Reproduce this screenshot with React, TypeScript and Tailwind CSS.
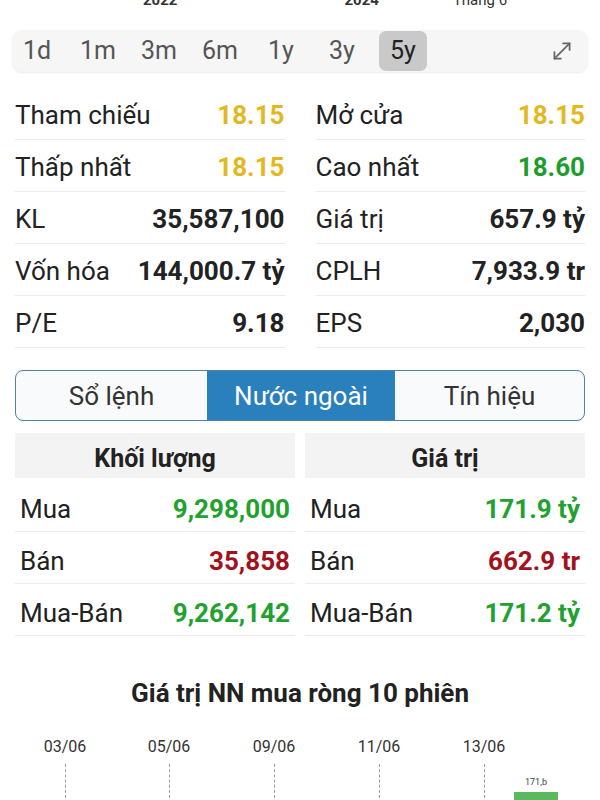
import React from "react";

const font = { fontFamily: "Roboto, 'Noto Sans', 'Liberation Sans', sans-serif" };

type Cell = { label: string; value: string; color: string };

const left: Cell[] = [
  { label: "Tham chiếu", value: "18.15", color: "text-[#e3b81f]" },
  { label: "Thấp nhất", value: "18.15", color: "text-[#e3b81f]" },
  { label: "KL", value: "35,587,100", color: "text-[#222]" },
  { label: "Vốn hóa", value: "144,000.7 tỷ", color: "text-[#222]" },
  { label: "P/E", value: "9.18", color: "text-[#222]" },
];
const right: Cell[] = [
  { label: "Mở cửa", value: "18.15", color: "text-[#e3b81f]" },
  { label: "Cao nhất", value: "18.60", color: "text-[#1c9e2c]" },
  { label: "Giá trị", value: "657.9 tỷ", color: "text-[#222]" },
  { label: "CPLH", value: "7,933.9 tr", color: "text-[#222]" },
  { label: "EPS", value: "2,030", color: "text-[#222]" },
];

const vol: Cell[] = [
  { label: "Mua", value: "9,298,000", color: "text-[#21a12e]" },
  { label: "Bán", value: "35,858", color: "text-[#a3121c]" },
  { label: "Mua-Bán", value: "9,262,142", color: "text-[#21a12e]" },
];
const val: Cell[] = [
  { label: "Mua", value: "171.9 tỷ", color: "text-[#21a12e]" },
  { label: "Bán", value: "662.9 tr", color: "text-[#a3121c]" },
  { label: "Mua-Bán", value: "171.2 tỷ", color: "text-[#21a12e]" },
];

function StatCol({ items }: { items: Cell[] }) {
  return (
    <div className="flex flex-col">
      {items.map((c) => (
        <div
          key={c.label}
          className="flex h-[52px] items-center justify-between border-b border-[#ebebeb] pt-[2px] text-[26px] leading-none"
        >
          <span className="text-[#222]">{c.label}</span>
          <span className={`font-bold ${c.color}`}>{c.value}</span>
        </div>
      ))}
    </div>
  );
}

function Table({ title, items }: { title: string; items: Cell[] }) {
  return (
    <div className="flex flex-col">
      <div className="flex h-[45px] items-center justify-center bg-[#f3f3f3] pt-[5px] text-[25px] font-bold leading-none text-[#222]">
        {title}
      </div>
      <div className="mt-[2px] flex flex-col">
        {items.map((c) => (
          <div
            key={c.label}
            className="flex h-[52px] items-center justify-between border-b border-[#ebebeb] px-[5px] pt-[6px] text-[26px] leading-none"
          >
            <span className="text-[#222]">{c.label}</span>
            <span className={`font-bold ${c.color}`}>{c.value}</span>
          </div>
        ))}
      </div>
    </div>
  );
}

export default function App() {
  const ranges = ["1d", "1m", "3m", "6m", "1y", "3y", "5y"];
  const dates = [
    { d: "03/06", x: 65 },
    { d: "05/06", x: 169 },
    { d: "09/06", x: 274 },
    { d: "11/06", x: 379 },
    { d: "13/06", x: 484 },
  ];
  return (
    <div className="h-[800px] w-[600px] overflow-hidden bg-white" style={font}>
      {/* top axis labels (cut) */}
      <div className="relative h-[30px] overflow-hidden">
        <div className="-mt-[11px] flex text-[15px] text-[#333]">
          <span className="ml-[143px] font-bold">2022</span>
          <span className="ml-[167px] font-bold">2024</span>
          <span className="ml-[74px]">Tháng 6</span>
        </div>
      </div>

      {/* time range bar */}
      <div className="mx-[12px] flex h-[42px] items-center rounded-[10px] bg-[#f6f6f6] px-[1px] shadow-[0_1px_2px_rgba(0,0,0,0.08)]">
        <div className="flex gap-[13px]">
          {ranges.map((r) => (
            <div
              key={r}
              className={`flex h-[40px] w-[48px] items-center justify-center rounded-[7px] text-[25px] ${
                r === "5y" ? "bg-[#c9c9c9] text-[#222]" : "text-[#555]"
              }`}
            >
              {r}
            </div>
          ))}
        </div>
        <div className="ml-auto mr-[12px] flex items-center">
          <svg width="26" height="26" viewBox="0 0 24 24" fill="none" stroke="#666" strokeWidth="1.6" strokeLinecap="round" strokeLinejoin="round">
            <path d="M11 19H5v-6" />
            <path d="M13 5h6v6" />
            <path d="M19 5 5 19" />
          </svg>
        </div>
      </div>

      {/* stats */}
      <div className="mt-[16px] grid grid-cols-2 gap-[31px] px-[15px]">
        <StatCol items={left} />
        <StatCol items={right} />
      </div>

      {/* tabs */}
      <div className="mx-[15px] mt-[22px] grid h-[51px] grid-cols-[191px_188px_1fr] overflow-hidden rounded-[8px] border border-[#54809f] bg-[#f9fafb] text-[26px] leading-none">
        <div className="flex items-center justify-center text-[#333]">Sổ lệnh</div>
        <div className="flex items-center justify-center bg-[#2a7fbd] text-white">Nước ngoài</div>
        <div className="flex items-center justify-center text-[#333]">Tín hiệu</div>
      </div>

      {/* foreign tables */}
      <div className="mt-[12px] grid grid-cols-2 gap-[10px] px-[15px]">
        <Table title="Khối lượng" items={vol} />
        <Table title="Giá trị" items={val} />
      </div>

      {/* chart */}
      <div className="mt-[42px] text-center text-[26px] font-bold leading-[30px] text-[#222]">
        Giá trị NN mua ròng 10 phiên
      </div>
      <div className="relative mt-[29px] h-[100px]">
        {dates.map((p) => (
          <React.Fragment key={p.d}>
            <span
              className="absolute top-0 w-[60px] -translate-x-1/2 text-center text-[16px] leading-[20px] text-[#333]"
              style={{ left: p.x }}
            >
              {p.d}
            </span>
            <div
              className="absolute top-[27px] h-[60px] border-l border-dashed border-[#9a9a9a]"
              style={{ left: p.x }}
            />
          </React.Fragment>
        ))}
        <span className="absolute left-[516px] top-[40px] w-[40px] text-center text-[9px] leading-[10px] text-[#444]">
          171,b
        </span>
        <div className="absolute left-[514px] top-[55px] h-[40px] w-[44px] bg-[#5cb85c]" />
      </div>
    </div>
  );
}
